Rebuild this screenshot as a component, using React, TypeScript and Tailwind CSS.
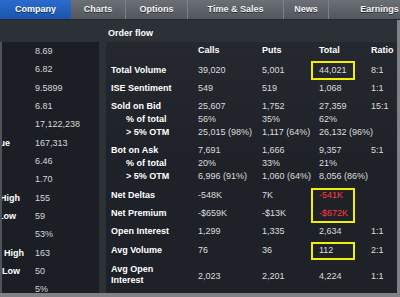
import React from 'react';

type Line = { label: string; sub?: boolean; v: string[]; red?: boolean };
type Group = { pt: string; lines: Line[] };

const tabs = [
  { name: 'Company', w: 'w-[71px]', active: true },
  { name: 'Charts', w: 'w-[54px]' },
  { name: 'Options', w: 'w-[62px]' },
  { name: 'Time & Sales', w: 'w-[96px]' },
  { name: 'News', w: 'w-[45px]' },
  { name: 'Earnings', w: 'w-[102px]' },
];

const leftRows: { l?: string; pr?: string; v: string }[] = [
  { v: '8.69' },
  { v: '6.82' },
  { v: '9.5899' },
  { v: '6.81' },
  { v: '17,122,238' },
  { l: 'Avg Daily Value', pr: 'pr-[25px]', v: '167,313' },
  { v: '6.46' },
  { v: '1.70' },
  { l: '52 Wk High', pr: 'pr-[15px]', v: '155' },
  { l: '52 Wk Low', pr: 'pr-[19px]', v: '59' },
  { v: '53%' },
  { l: 'IV High', pr: 'pr-[11px]', v: '163' },
  { l: 'IV Low', pr: 'pr-[15px]', v: '50' },
  { v: '5%' },
];

const groups: Group[] = [
  { pt: 'pt-[7px]', lines: [{ label: 'Total Volume', v: ['39,020', '5,001', '44,021', '8:1'] }] },
  { pt: 'pt-[5.3px]', lines: [{ label: 'ISE Sentiment', v: ['549', '519', '1,068', '1:1'] }] },
  {
    pt: 'pt-[5.3px]',
    lines: [
      { label: 'Sold on Bid', v: ['25,607', '1,752', '27,359', '15:1'] },
      { label: '% of total', sub: true, v: ['56%', '35%', '62%', ''] },
      { label: '> 5% OTM', sub: true, v: ['25,015 (98%)', '1,117 (64%)', '26,132 (96%)', ''] },
    ],
  },
  {
    pt: 'pt-[5.3px]',
    lines: [
      { label: 'Bot on Ask', v: ['7,691', '1,666', '9,357', '5:1'] },
      { label: '% of total', sub: true, v: ['20%', '33%', '21%', ''] },
      { label: '> 5% OTM', sub: true, v: ['6,996 (91%)', '1,060 (64%)', '8,056 (86%)', ''] },
    ],
  },
  { pt: 'pt-[5.3px]', lines: [{ label: 'Net Deltas', v: ['-548K', '7K', '-541K', ''], red: true }] },
  { pt: 'pt-[5.3px]', lines: [{ label: 'Net Premium', v: ['-$659K', '-$13K', '-$672K', ''], red: true }] },
  { pt: 'pt-[5.3px]', lines: [{ label: 'Open Interest', v: ['1,299', '1,335', '2,634', '1:1'] }] },
  { pt: 'pt-[5.3px]', lines: [{ label: 'Avg Volume', v: ['76', '36', '112', '2:1'] }] },
];

const grid = 'grid grid-cols-[92px_64px_57px_52px_1fr]';

export default function App() {
  return (
    <div className="w-[400px] h-[297px] overflow-hidden flex flex-col bg-[#2c3037] font-['Liberation_Sans',Arial,sans-serif] text-[9px] leading-[13px]">
      {/* Tab bar */}
      <div className="h-[20px] shrink-0 flex overflow-hidden bg-linear-to-b from-[#6b7077] to-[#52575e] border-b border-[#24282e]">
        {tabs.map((t, i) => (
          <div
            key={t.name}
            className={`${t.w} shrink-0 h-full flex items-center justify-center font-bold whitespace-nowrap [text-shadow:0_1px_0_rgba(0,0,0,0.55)] ${
              t.active
                ? 'bg-linear-to-b from-[#2a6bcb] to-[#1a56b0] text-white'
                : 'text-[#f2f2f2]'
            } ${i > 1 ? 'border-l border-[#7d828a]' : ''}`}
          >
            {t.name}
          </div>
        ))}
      </div>

      {/* Body */}
      <div className="flex-1 min-h-0 flex flex-col border-r-[3px] border-b-[4px] border-[#7e8186]">
        <div className="h-[22px] shrink-0 flex items-center pt-[4px] pl-[108px] font-bold text-white">Order flow</div>

        <div className="flex-1 min-h-0 flex gap-[7px]">
          {/* Left panel */}
          <div className="w-[99px] shrink-0 bg-[#1b1f25] border-l-[2px] border-[#50545a] overflow-hidden pt-[0.5px]">
            {leftRows.map((r, i) => (
              <div key={i} className="h-[18.33px] flex items-center">
                <div className="w-[33px] shrink-0 flex justify-end overflow-hidden">
                  {r.l ? (
                    <span className={`shrink-0 whitespace-nowrap font-bold text-white ${r.pr}`}>{r.l}</span>
                  ) : null}
                </div>
                <span className="whitespace-nowrap text-[#d6d6d6]">{r.v}</span>
              </div>
            ))}
          </div>

          {/* Right panel */}
          <div className="relative flex-1 bg-linear-to-b from-[#25292f] via-[#1e2228] to-[#1e2228] overflow-hidden">
            <div className={`${grid} mt-[1.5px] font-bold text-white`}>
              <div />
              <div>Calls</div>
              <div>Puts</div>
              <div>Total</div>
              <div>Ratio</div>
            </div>

            {groups.map((g, gi) => (
              <div key={gi} className={g.pt}>
                {g.lines.map((ln, li) => (
                  <div key={li} className={`${grid} whitespace-nowrap`}>
                    <div className={`font-bold text-white ${ln.sub ? 'pl-[20px]' : 'pl-[5px]'}`}>{ln.label}</div>
                    {ln.v.map((val, vi) => (
                      <div
                        key={vi}
                        className={ln.red && vi === 2 ? 'text-[#ff3a3a]' : 'text-[#dcdcdc]'}
                      >
                        {val}
                      </div>
                    ))}
                  </div>
                ))}
              </div>
            ))}

            <div className={`${grid} pt-[7px] whitespace-nowrap`}>
              <div className="pl-[5px] font-bold text-white leading-[11px]">
                Avg Open
                <br />
                Interest
              </div>
              <div className="self-center mt-[4px] text-[#dcdcdc]">2,023</div>
              <div className="self-center mt-[4px] text-[#dcdcdc]">2,201</div>
              <div className="self-center mt-[4px] text-[#dcdcdc]">4,224</div>
              <div className="self-center mt-[4px] text-[#dcdcdc]">1:1</div>
            </div>

            {/* Highlight annotations */}
            <div className="absolute left-[205px] top-[19px] w-[44px] h-[19px] border-2 border-[#f3ef00]" />
            <div className="absolute left-[205px] top-[146px] w-[44px] h-[35px] border-2 border-[#f3ef00]" />
            <div className="absolute left-[205px] top-[200px] w-[44px] h-[18px] border-2 border-[#f3ef00]" />
          </div>
        </div>
      </div>
    </div>
  );
}
